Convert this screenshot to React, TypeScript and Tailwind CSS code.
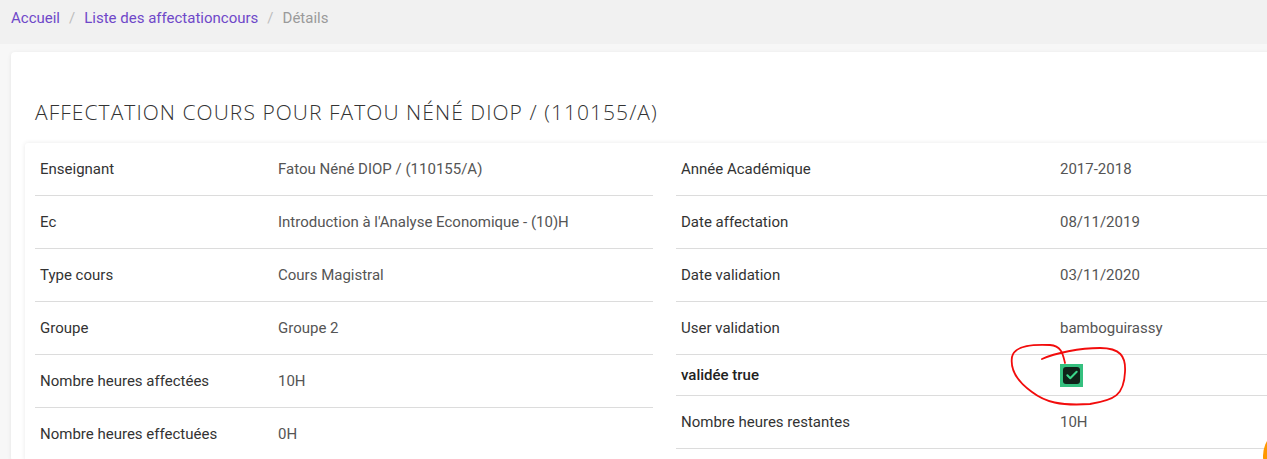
import React from 'react';

type Row = { label: string; value: React.ReactNode; bold?: boolean; short?: boolean };

const leftRows: Row[] = [
  { label: 'Enseignant', value: 'Fatou Néné DIOP / (110155/A)' },
  { label: 'Ec', value: "Introduction à l'Analyse Economique - (10)H" },
  { label: 'Type cours', value: 'Cours Magistral' },
  { label: 'Groupe', value: 'Groupe 2' },
  { label: 'Nombre heures affectées', value: '10H' },
  { label: 'Nombre heures effectuées', value: '0H' },
];

const CheckedBox: React.FC = () => (
  <span className="inline-flex h-[23px] w-[23px] items-center justify-center bg-[#35c07f]">
    <span className="flex h-[17px] w-[17px] items-center justify-center rounded-[3px] bg-[#0f2219]">
      <svg width="14" height="14" viewBox="0 0 24 24" fill="none" stroke="#3ad68a" strokeWidth="3.5" strokeLinecap="round" strokeLinejoin="round">
        <path d="M4 12.5l5 5L20 6.5" />
      </svg>
    </span>
  </span>
);

const rightRows: Row[] = [
  { label: 'Année Académique', value: '2017-2018' },
  { label: 'Date affectation', value: '08/11/2019' },
  { label: 'Date validation', value: '03/11/2020' },
  { label: 'User validation', value: 'bamboguirassy' },
  { label: 'validée true', value: <CheckedBox />, bold: true, short: true },
  { label: 'Nombre heures restantes', value: '10H' },
];

const DetailTable: React.FC<{ rows: Row[]; labelWidth: string }> = ({ rows, labelWidth }) => (
  <div className="w-[618px] shrink-0">
    {rows.map(row => (
      <div
        key={row.label}
        className={`flex items-center border-b border-[#dcdcdc] ${row.short ? 'h-[41px]' : 'h-[53px]'}`}
      >
        <div className={`${labelWidth} shrink-0 pl-[5px] ${row.bold ? 'font-medium text-[#222]' : 'text-[#333]'}`}>
          {row.label}
        </div>
        <div className="flex items-center text-[#555]">{row.value}</div>
      </div>
    ))}
  </div>
);

const App: React.FC = () => {
  return (
    <div className="relative h-[459px] w-full overflow-hidden bg-[#f7f7f7] text-[15px] font-['Roboto','Liberation_Sans',sans-serif]">
      {/* Breadcrumb */}
      <nav className="flex h-[44px] items-center bg-[#f1f1f1] px-[11px] pb-[8px] text-[15px]">
        <a className="text-[#6f48c9]">Accueil</a>
        <span className="px-[9px] text-[#bdbdbd]">/</span>
        <a className="text-[#6f48c9]">Liste des affectationcours</a>
        <span className="px-[9px] text-[#bdbdbd]">/</span>
        <span className="text-[#9a9a9a]">Détails</span>
      </nav>

      <div className="pl-[11px] pt-[8px]">
        <div className="w-[1300px] rounded-[4px] bg-white shadow-[0_1px_4px_rgba(0,0,0,0.08)]">
          <h1 className="pl-[24px] pt-[45px] text-[21px] leading-[30px] font-light uppercase tracking-[1.05px] text-[#333] font-['Open_Sans','Liberation_Sans',sans-serif]">
            Affectation cours pour Fatou Néné DIOP / (110155/A)
          </h1>

          <div className="ml-[14px] mt-[16px] flex gap-[23px] rounded-[3px] bg-white pl-[10px] shadow-[0_0_5px_rgba(0,0,0,0.09)]">
            <DetailTable rows={leftRows} labelWidth="w-[243px]" />
            <DetailTable rows={rightRows} labelWidth="w-[384px]" />
          </div>
        </div>
      </div>

      {/* floating button, cut off at the edge */}
      <div className="absolute left-[1263px] top-[426px] h-[60px] w-[60px] rounded-full bg-[#ff9800]" />

      {/* red hand-drawn annotation */}
      <svg className="pointer-events-none absolute left-0 top-0" width="1267" height="459" fill="none">
        <path
          d="M1042 359 C1055 353 1080 348 1100 348 C1120 348 1126 356 1125 372 C1124 395 1115 400 1090 404 C1060 406 1045 402 1032 392 C1018 382 1010 370 1012 357 C1014 346 1030 344 1050 345 C1062 346 1063 355 1065 363"
          stroke="#f20c0c"
          strokeWidth="1.8"
          strokeLinecap="round"
          strokeLinejoin="round"
        />
      </svg>
    </div>
  );
};

export default App;
